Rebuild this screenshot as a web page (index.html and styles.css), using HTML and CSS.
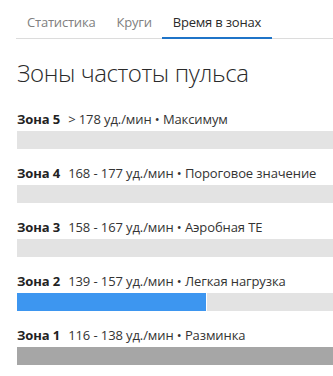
FILE: index.html
```html
<!DOCTYPE html>
<html lang="ru">
<head>
<meta charset="utf-8">
<link rel="stylesheet" href="styles.css">
</head>
<body>
<div class="tabs">
  <div class="tab">Статистика</div>
  <div class="tab">Круги</div>
  <div class="tab active">Время в зонах</div>
</div>
<h1 class="title">Зоны частоты пульса</h1>
<div class="zones">
  <div class="zone">
    <div class="label"><b>Зона 5</b><span class="desc">&gt; 178 уд./мин • Максимум</span></div>
    <div class="bar"></div>
  </div>
  <div class="zone">
    <div class="label"><b>Зона 4</b><span class="desc">168 - 177 уд./мин • Пороговое значение</span></div>
    <div class="bar"></div>
  </div>
  <div class="zone">
    <div class="label"><b>Зона 3</b><span class="desc">158 - 167 уд./мин • Аэробная ТЕ</span></div>
    <div class="bar"></div>
  </div>
  <div class="zone">
    <div class="label"><b>Зона 2</b><span class="desc">139 - 157 уд./мин • Легкая нагрузка</span></div>
    <div class="bar"><div class="fill blue" style="width:189px"></div></div>
  </div>
  <div class="zone">
    <div class="label"><b>Зона 1</b><span class="desc">116 - 138 уд./мин • Разминка</span></div>
    <div class="bar dark"></div>
  </div>
</div>
</body>
</html>
```
FILE: styles.css
```css
html, body {
  margin: 0;
  padding: 0;
  background: #fff;
}
body {
  font-family: "Open Sans", "Liberation Sans", sans-serif;
  color: #222;
  overflow: hidden;
}
.tabs {
  display: flex;
  margin-left: 16px;
  border-bottom: 1px solid #dcdcdc;
}
.tab {
  padding: 12px 10.5px 5px;
  line-height: 20px;
  font-size: 13px;
  letter-spacing: -0.2px;
  color: #808080;
}
.tab:first-child {
  padding-left: 11px;
}
.tab.active {
  color: #2a2a2a;
  border-bottom: 2px solid #1f74c8;
  margin-bottom: -1px;
}
.title {
  margin: 18px 0 0 17px;
  font-size: 24px;
  line-height: 32px;
  font-weight: 300;
  letter-spacing: -0.4px;
  color: #2a2a2a;
}
.zones {
  margin: 21px 0 0 17px;
  display: flex;
  flex-direction: column;
  gap: 15px;
}
.label {
  font-size: 13px;
  line-height: 18px;
  color: #333;
  white-space: nowrap;
  letter-spacing: -0.1px;
}
.label b {
  font-weight: 700;
  color: #222;
}
.desc {
  margin-left: 8px;
}
.bar {
  margin-top: 3px;
  height: 18px;
  background: #e3e3e3;
  display: flex;
}
.bar.dark {
  background: #a6a6a6;
}
.fill {
  height: 100%;
  border-right: 1px solid #fff;
}
.fill.blue {
  background: #3d96f0;
}
```
